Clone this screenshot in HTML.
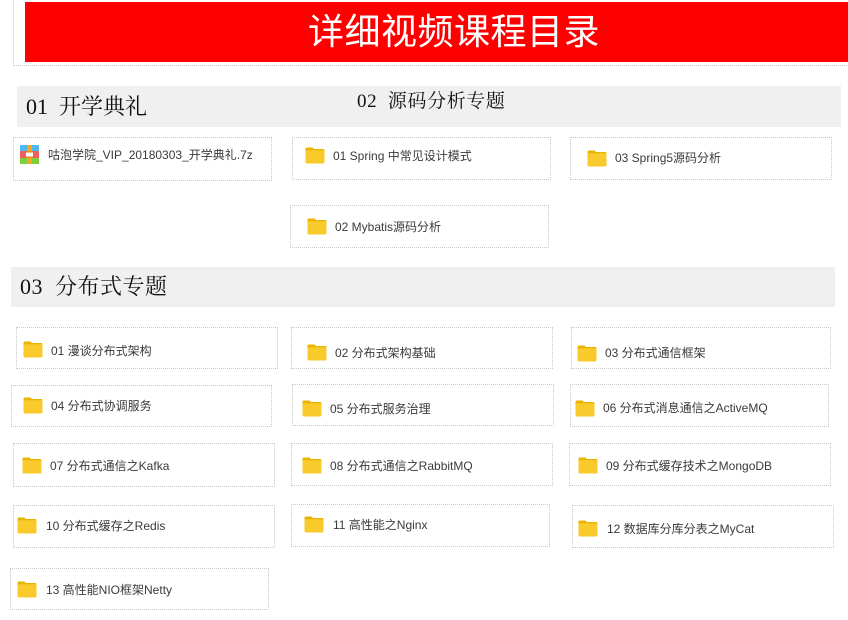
<!DOCTYPE html>
<html><head><meta charset="utf-8"><style>
body{margin:0;width:848px;height:620px;background:#fff;position:relative;overflow:hidden;font-family:"Liberation Sans","Noto Sans CJK SC",sans-serif}
.a{position:absolute}
.box{position:absolute;border:1px dotted #c8c8c8;box-sizing:border-box}
.bar{position:absolute;background:#f0f0f0}
.h{position:absolute;font-family:"Liberation Serif","Noto Serif CJK SC",serif;color:#111;white-space:nowrap;line-height:1}
.f{position:absolute;width:20px;height:17px}
.t{position:absolute;font-size:12px;color:#3a3a3a;white-space:nowrap;line-height:14px}
</style></head><body>
<div class="box" style="left:13px;top:-2px;width:840px;height:68px"></div>
<div class="a" style="left:25px;top:2px;width:823px;height:60px;background:#ff0000"></div>
<div class="a" style="left:308px;top:2px;height:60px;line-height:60px;color:#fff;font-size:36px;letter-spacing:0.5px;white-space:nowrap;font-family:'Liberation Sans','Noto Sans CJK SC',sans-serif">详细视频课程目录</div>

<div class="bar" style="left:17px;top:86px;width:824px;height:41px"></div>
<div class="h" style="left:26px;top:96px;font-size:22px">01&nbsp; 开学典礼</div>
<div class="h" style="left:357px;top:92px;font-size:19px;letter-spacing:0.6px">02&nbsp; 源码分析专题</div>

<div class="bar" style="left:11px;top:267px;width:824px;height:40px"></div>
<div class="h" style="left:20px;top:276px;font-size:22px;letter-spacing:0.5px">03&nbsp; 分布式专题</div>

<div class="box" style="left:13px;top:137px;width:259px;height:44px"></div>
<svg class="a" style="left:20px;top:145px" width="19" height="19" viewBox="0 0 19 19"><rect width="19" height="6" fill="#4fb8ef"/><rect y="6" width="19" height="7" fill="#f06060"/><rect y="13" width="19" height="6" fill="#7ccf3f"/><rect x="7" width="5" height="19" fill="#f5a623"/><rect x="5.5" y="7" width="8" height="5" fill="#fff" stroke="#d08000"/></svg>
<div class="t" style="left:48px;top:148px">咕泡学院_VIP_20180303_开学典礼.7z</div>

<div id="items"></div>
<script>
var d=[
[292,137,259,43,305,147,333,156,"01 Spring 中常见设计模式"],
[570,137,262,43,587,150,615,158,"03 Spring5源码分析"],
[290,205,259,43,307,218,335,227,"02 Mybatis源码分析"],
[16,327,262,42,23,341,51,351,"01 漫谈分布式架构"],
[291,327,262,42,307,344,335,353,"02 分布式架构基础"],
[571,327,260,42,577,345,605,353,"03 分布式通信框架"],
[11,385,261,42,23,397,51,406,"04 分布式协调服务"],
[292,384,262,42,302,400,330,409,"05 分布式服务治理"],
[570,384,259,43,575,400,603,408,"06 分布式消息通信之ActiveMQ"],
[13,443,262,44,22,457,50,466,"07 分布式通信之Kafka"],
[291,443,262,43,302,457,330,466,"08 分布式通信之RabbitMQ"],
[569,443,262,43,578,457,606,466,"09 分布式缓存技术之MongoDB"],
[13,505,262,43,17,517,46,526,"10 分布式缓存之Redis"],
[291,504,259,43,304,516,333,525,"11 高性能之Nginx"],
[572,505,262,43,578,520,607,529,"12 数据库分库分表之MyCat"],
[10,568,259,42,17,581,46,590,"13 高性能NIO框架Netty"]];
var h="";
d.forEach(function(e){
h+='<div class="box" style="left:'+e[0]+'px;top:'+e[1]+'px;width:'+e[2]+'px;height:'+e[3]+'px"></div>';
h+='<svg class="f" style="left:'+e[4]+'px;top:'+e[5]+'px" viewBox="0 0 20 17"><path d="M0.5 2Q0.5 0.5 2 0.5H7.5L9 2H18Q19.5 2 19.5 3.5V5H0.5Z" fill="#e8b400"/><rect x="0.5" y="3.2" width="19" height="13.3" rx="1.5" fill="#f9ca2b"/></svg>';
h+='<div class="t" style="left:'+e[6]+'px;top:'+(e[7]-7)+'px">'+e[8]+'</div>';
});
document.getElementById("items").innerHTML=h;
</script>
</body></html>
